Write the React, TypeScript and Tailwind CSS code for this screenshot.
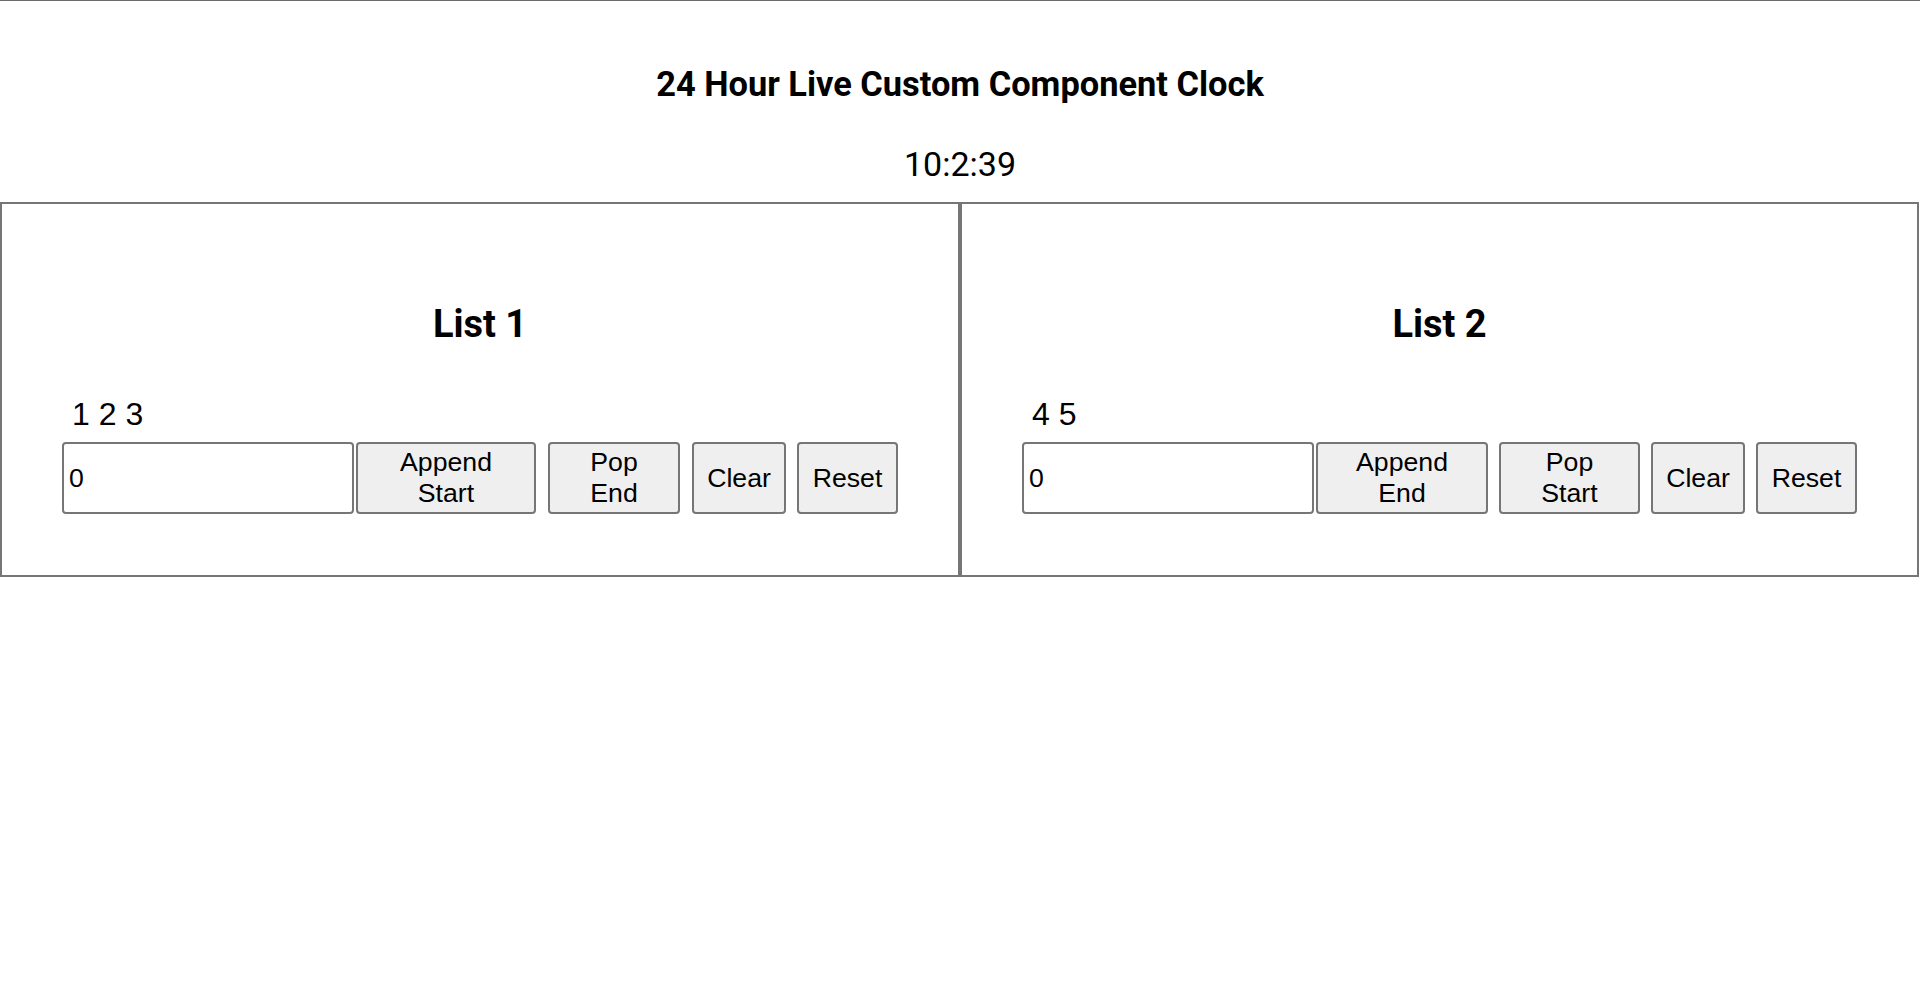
import { useState } from 'react';

type Action = { label: string; width: string; margin: string };

const listOneActions: Action[] = [
    { label: 'Append Start', width: 'w-[180px]', margin: 'ml-[2px]' },
    { label: 'Pop End', width: 'w-[132px]', margin: 'ml-[12px]' },
    { label: 'Clear', width: 'w-[94px]', margin: 'ml-[12px]' },
    { label: 'Reset', width: 'w-[101px]', margin: 'ml-[11px]' },
];

const listTwoActions: Action[] = [
    { label: 'Append End', width: 'w-[172px]', margin: 'ml-[2px]' },
    { label: 'Pop Start', width: 'w-[141px]', margin: 'ml-[11px]' },
    { label: 'Clear', width: 'w-[94px]', margin: 'ml-[11px]' },
    { label: 'Reset', width: 'w-[101px]', margin: 'ml-[11px]' },
];

function ListPanel({ title, items, actions }: { title: string; items: number[]; actions: Action[] }) {
    const [value, setValue] = useState('0');

    return (
        <div className="flex-1 border-2 border-[#767676] px-[60px] pt-[98px] pb-[61px]">
            <h2 className="text-center font-['Roboto',sans-serif] text-[38px] font-bold leading-[44px]">
                {title}
            </h2>
            <div className="mt-[49.5px] pl-[10px] text-[32px] leading-[37px]">
                {items.join(' ')}
            </div>
            <div className="mt-[9.5px] flex h-[72px]">
                <input
                    type="text"
                    value={value}
                    onChange={(e) => setValue(e.target.value)}
                    className="w-[292px] rounded-[4px] border-2 border-[#767676] bg-white pl-[5px] font-['Liberation_Sans',Arial,sans-serif] text-[26.67px] text-black outline-none"
                />
                {actions.map((a) => (
                    <button
                        key={a.label}
                        type="button"
                        className={`${a.width} ${a.margin} rounded-[4px] border-2 border-[#767676] bg-[#efefef] px-[8px] text-center font-['Liberation_Sans',Arial,sans-serif] text-[26.67px] leading-[30.67px] text-black`}
                    >
                        {a.label.split(' ').map((word) => (
                            <span key={word} className="block">
                                {word}
                            </span>
                        ))}
                    </button>
                ))}
            </div>
        </div>
    );
}

export default function App() {
    return (
        <div className="min-h-[1002px] border-t border-[#6b6b6b] bg-white font-['Liberation_Sans',Arial,sans-serif] text-black">
            <h1 className="mt-[63px] text-center font-['Roboto',sans-serif] text-[34.4px] font-bold leading-[40px]">
                24 Hour Live Custom Component Clock
            </h1>
            <div className="mt-[40px] text-center font-['Roboto',sans-serif] text-[34px] leading-[40px]">
                10:2:39
            </div>
            <div className="mt-[18px] flex w-[1919px]">
                <ListPanel title="List 1" items={[1, 2, 3]} actions={listOneActions} />
                <ListPanel title="List 2" items={[4, 5]} actions={listTwoActions} />
            </div>
        </div>
    );
}
